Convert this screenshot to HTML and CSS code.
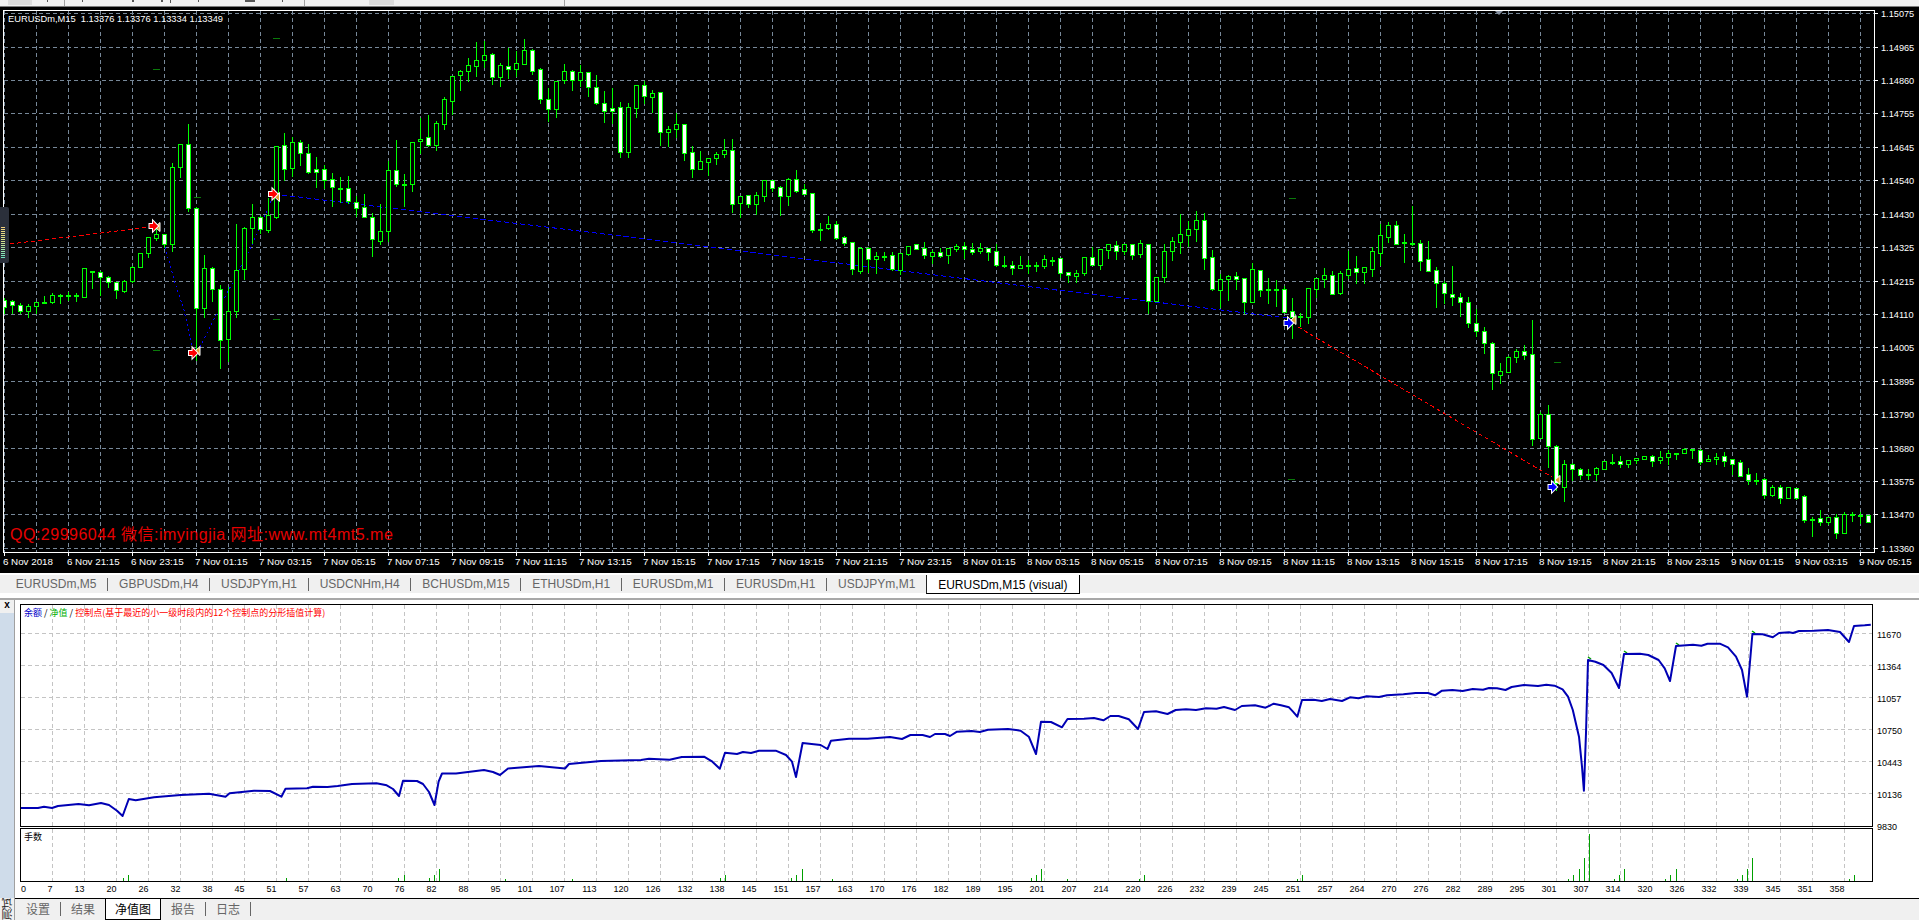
FILE: index.html
```html
<!DOCTYPE html>
<html lang="zh">
<head>
<meta charset="utf-8">
<title>EURUSDm,M15 (visual)</title>
<link rel="stylesheet" href="styles.css">
</head>
<body>
<div class="app">
  <header class="toolbar">
    <svg class="toolbar-bits" width="1919" height="6" viewBox="0 0 1919 6">
      <rect class="grip" x="8" y="0" width="24" height="5"/>
      <rect class="grip" x="369" y="0" width="25" height="5"/>
      <rect class="speck" x="47" y="0" width="1" height="2"/>
      <rect class="speck" x="82" y="0" width="1" height="2"/>
      <rect class="speck" x="132" y="0" width="2" height="2"/>
      <rect class="speck" x="161" y="0" width="2" height="2"/>
      <rect class="speck" x="170" y="0" width="1" height="3"/>
      <rect class="speck" x="198" y="0" width="1" height="2"/>
      <rect class="speck" x="245" y="0" width="10" height="2"/>
      <rect class="speck" x="282" y="0" width="1" height="2"/>
      <rect class="sep" x="64" y="0" width="1" height="6"/>
      <rect class="sep" x="304" y="0" width="1" height="6"/>
      <rect class="sep" x="564" y="0" width="1" height="6"/>
    </svg>
  </header>

  <section class="chart-pane">
    <svg id="price-chart" class="chart-svg" width="1919" height="566" viewBox="0 7 1919 566"></svg>
    <div class="level-meter"></div>
  </section>

  <nav class="chart-tabs">
    <span class="chart-tab">EURUSDm,M5</span>
    <span class="chart-tab">GBPUSDm,H4</span>
    <span class="chart-tab">USDJPYm,H1</span>
    <span class="chart-tab">USDCNHm,H4</span>
    <span class="chart-tab">BCHUSDm,M15</span>
    <span class="chart-tab">ETHUSDm,H1</span>
    <span class="chart-tab">EURUSDm,M1</span>
    <span class="chart-tab">EURUSDm,H1</span>
    <span class="chart-tab">USDJPYm,M1</span>
    <span class="chart-tab chart-tab-active">EURUSDm,M15 (visual)</span>
  </nav>

  <section class="tester">
    <aside class="tester-side">
      <span class="tester-close">x</span>
      <div class="tester-stripe"></div>
      <span class="tester-title">测试</span>
    </aside>
    <div class="tester-body">
      <svg id="equity-chart" class="equity-svg" width="1905" height="298" viewBox="14 600 1905 298"></svg>
      <nav class="tester-tabs">
        <span class="tester-tab tester-tab-sep">设置</span>
        <span class="tester-tab">结果</span>
        <span class="tester-tab tester-tab-active">净值图</span>
        <span class="tester-tab tester-tab-sep">报告</span>
        <span class="tester-tab tester-tab-sep">日志</span>
      </nav>
    </div>
  </section>
</div>
<script src="chart.js"></script>
</body>
</html>
```

FILE: styles.css
```css
* { box-sizing: border-box; }
html, body { margin: 0; padding: 0; background: #fff; }
body { width: 1919px; height: 920px; overflow: hidden; font-family: "Liberation Sans", "Noto Sans CJK SC", sans-serif; }
.app { display: flex; flex-direction: column; width: 1919px; height: 920px; }

.toolbar { height: 7px; background: #f0f0f0; border-bottom: 1px solid #7c7c7c; flex: none; }
.toolbar-bits { display: block; }
.grip { fill: #dcdcdc; }
.speck { fill: #555; }
.sep { fill: #a0a0a0; }

.chart-pane { position: relative; height: 566px; background: #000; flex: none; }
.chart-svg { display: block; }
.level-meter {
  position: absolute; left: 0; top: 200px; width: 9px; height: 56px;
  background: #2b303b; border-radius: 0 2px 2px 0;
}
.level-meter::after {
  content: ""; position: absolute; left: 1px; top: 20px; width: 4px; height: 31px;
  background:
    repeating-linear-gradient(to bottom, transparent 0 1px, #2b303b 1px 2px),
    linear-gradient(to bottom, #f3d27e, #d9e08a 45%, #6fe6c4);
}

.frame { fill: none; stroke: #fff; stroke-width: 1; }
.tick { stroke: #fff; stroke-width: 1; }
.grid { stroke: #778899; stroke-width: 1; stroke-dasharray: 4 3; fill: none; }
.wick { stroke: #00ff00; stroke-width: 1; }
.body-up { fill: #000; stroke: #00ff00; stroke-width: 1; }
.body-down { fill: #fff; stroke: #00ff00; stroke-width: 1; }
.doji { fill: #00ff00; }
.dash-mark { fill: #0a7a0a; }
.trade-red { fill: none; stroke: #ff0000; stroke-width: 1; stroke-dasharray: 4 3; }
.trade-blue { fill: none; stroke: #0000ff; stroke-width: 1; stroke-dasharray: 5 3; }
.trade-blue-thin { fill: none; stroke: #0000ff; stroke-width: 1; stroke-dasharray: 2 3; }
.arrow-red { fill: #ff0000; stroke: #fff; stroke-width: 2; paint-order: stroke; }
.arrow-blue { fill: #0000ff; stroke: #fff; stroke-width: 2; paint-order: stroke; }
.arrow-tail { fill: #e0a030; stroke: #fff; stroke-width: 1; }
.shift-mark { fill: #8a94a4; }
.crisp { shape-rendering: crispEdges; }

.axis-price { font-family: "Liberation Sans", sans-serif; font-size: 9.2px; fill: #fff; }
.axis-time { font-family: "Liberation Sans", sans-serif; font-size: 9.8px; fill: #fff; }
.chart-info { font-family: "Liberation Sans", sans-serif; font-size: 9.3px; fill: #fff; white-space: pre; }
.watermark { font-family: "Liberation Sans", "Noto Sans CJK SC", sans-serif; font-size: 16px; letter-spacing: 0.5px; fill: #e80000; }

.chart-tabs {
  flex: none; height: 27px; display: flex; align-items: flex-start;
  padding: 2px 0 0 5px; background: #fff; font-size: 12px; color: #666;
  border-bottom: 2px solid #a8a8a8;
  background-image: linear-gradient(to bottom, #f0f0f0 0 18px, transparent 18px);
  background-position: 0 2px; background-repeat: no-repeat; background-size: 100% 18px;
}
.chart-tab { height: 13px; margin-top: 3px; padding: 0 10.8px; line-height: 13px; border-right: 1px solid #666; white-space: nowrap; }
.chart-tab:nth-child(9) { border-right: 0; }
.chart-tab-active {
  height: 19px; margin-top: 0; line-height: 20px; padding: 0 11px; background: #fff; color: #000;
  border: 0; border-right: 1px solid #000; border-bottom: 1px solid #000; border-left: 1px solid #222;
}

.tester { flex: 1; display: flex; min-height: 0; }
.tester-side { flex: none; width: 14px; display: flex; flex-direction: column; background: #f0f0f0; }
.tester-close { height: 13px; line-height: 10px; text-align: center; font-size: 10px; font-weight: bold; color: #000; flex: none; }
.tester-stripe { flex: 1; background: #cfdcea; }
.tester-title {
  flex: none; height: 22px; width: 14px; writing-mode: vertical-rl; transform: rotate(180deg);
  font-family: "Noto Sans CJK SC", sans-serif; font-size: 11px; line-height: 14px; color: #222; white-space: nowrap;
}
.tester-body { flex: 1; display: flex; flex-direction: column; border-left: 1px solid #a0a0a0; background: #fff; min-width: 0; }
.equity-svg { display: block; flex: none; }
.equity-box { fill: none; stroke: #000; stroke-width: 1; }
.equity-grid { stroke: #c4c4c4; stroke-width: 1; stroke-dasharray: 4 3; fill: none; }
.equity-line { fill: none; stroke: #0000b4; stroke-width: 2; stroke-linejoin: round; }
.equity-nub { fill: none; stroke: #00a000; stroke-width: 1.5; }
.lot-bar { fill: #00a000; }
.axis-eq { font-family: "Liberation Sans", sans-serif; font-size: 9px; fill: #000; }
.legend { font-family: "Noto Sans CJK SC", sans-serif; font-size: 9px; fill: #000; }
.legend-blue { fill: #0000c8; }
.legend-green { fill: #00b000; }
.legend-red { fill: #ff0000; }

.tester-tabs {
  flex: 1; display: flex; align-items: flex-start; padding-left: 1px; background: #f0f0f0;
  border-top: 1px solid #000; color: #666;
  font-family: "Noto Sans CJK SC", sans-serif; font-size: 12px;
}
.tester-tab { height: 14px; margin-top: 3px; padding: 0 10px; line-height: 14px; white-space: nowrap; }
.tester-tab-sep { border-right: 1px solid #666; }
.tester-tab-active {
  height: 21px; margin: 0; line-height: 20px; padding: 0 9px; background: #fff; color: #000;
  border: 1px solid #000; border-top: 0;
}
```

FILE: chart.js
```js
var NS = "http://www.w3.org/2000/svg";
function el(parent, tag, attrs, text) {
  var n = document.createElementNS(NS, tag);
  for (var k in attrs) n.setAttribute(k, attrs[k]);
  if (text !== undefined) n.textContent = text;
  parent.appendChild(n);
  return n;
}
function line(p, x1, y1, x2, y2, cls) { return el(p, "line", { x1: x1, y1: y1, x2: x2, y2: y2, "class": cls }); }
function poly(p, pts, cls) {
  return el(p, "polyline", { points: pts.map(function (q) { return q.join(","); }).join(" "), "class": cls });
}

/* candles: wick top, body top, body bottom, wick low, filled */
var candles = [
[298,300,307,313,1],[300,301,305,313,1],[303,305,311,313,1],[304,306,311,317,0],[302,302,306,313,0],[296,302,302,303,1],
[293,295,302,303,0],[294,295,295,303,1],[292,295,295,300,1],[293,295,296,301,1],[268,268,297,297,0],[271,271,271,288,1],
[271,272,277,295,1],[276,277,282,287,1],[282,282,290,298,1],[280,281,291,292,0],[266,267,281,282,0],[253,253,267,267,0],
[237,237,253,257,0],[228,234,238,240,0],[234,234,244,247,1],[163,167,244,251,0],[144,144,167,177,0],[124,144,208,211,1],
[207,208,308,360,1],[255,268,308,317,0],[267,268,289,301,1],[285,289,340,368,1],[287,311,339,361,0],[224,270,311,317,0],
[227,228,269,279,0],[204,217,228,243,0],[216,217,229,233,1],[198,215,230,232,0],[146,146,217,218,0],[133,145,169,180,1],
[137,142,168,176,0],[140,142,153,165,1],[144,153,172,173,1],[157,169,172,187,1],[165,169,180,188,1],[173,179,187,206,1],
[177,188,188,202,1],[176,188,201,203,1],[196,202,208,216,1],[194,207,217,217,1],[213,217,239,256,1],[204,231,241,244,0],
[161,170,231,241,0],[140,170,184,186,1],[174,184,184,206,1],[142,142,184,191,0],[118,139,141,153,0],[115,137,145,146,1],
[121,123,145,150,0],[97,99,124,129,0],[76,76,101,114,0],[70,71,75,90,0],[58,65,71,81,0],[42,60,66,76,0],
[41,55,60,67,0],[53,54,77,84,1],[63,65,77,86,0],[48,66,69,78,1],[51,63,69,76,0],[39,50,64,64,0],
[49,50,71,74,1],[68,69,99,103,1],[88,99,109,121,1],[81,81,109,117,0],[64,71,80,83,0],[70,71,80,90,1],
[65,72,80,86,0],[72,72,87,96,1],[75,87,103,104,1],[91,103,111,122,1],[88,108,111,123,1],[102,107,152,157,1],
[103,107,152,157,0],[85,85,108,117,0],
[81,85,96,103,1],[90,93,97,112,0],[92,92,132,145,1],[126,129,132,146,0],[113,124,129,137,0],[124,124,153,160,1],
[146,152,169,177,1],[151,161,169,169,0],[158,158,162,175,0],[152,154,158,164,0],[139,150,154,157,0],[139,150,204,212,1],
[196,196,203,217,0],[195,195,204,207,1],[192,195,204,214,0],[180,180,196,201,0],[180,180,188,191,1],[186,187,196,215,1],
[178,179,196,205,0],[170,179,191,192,1],[184,189,194,194,1],[193,193,230,232,1],[223,229,229,240,1],[216,224,228,229,0],
[221,224,238,239,1],[236,237,243,245,1],[242,242,269,274,1],[247,248,271,273,0],[247,248,259,272,1],[252,256,259,273,0],
[252,256,256,260,1],[252,255,269,270,1],[253,253,270,274,0],[246,246,254,255,0],[244,244,249,249,1],[242,248,255,258,1],
[250,252,256,263,0],[248,252,256,257,1],[248,248,255,263,0],[244,246,249,251,0],[242,246,249,258,1],[243,249,252,254,1],
[243,248,251,253,0],[248,248,252,260,1],[244,251,265,266,1],[256,265,265,267,1],[261,265,268,274,1],[256,265,268,268,0],
[260,265,265,273,1],[262,265,265,271,1],
[255,259,266,268,0],[257,260,260,265,1],[258,258,273,277,1],[272,272,275,282,1],[270,273,276,282,0],[257,257,273,275,0],
[247,257,265,265,1],[249,249,265,269,0],[244,244,250,258,0],[241,245,251,259,1],[244,244,251,254,0],[244,244,255,259,1],
[240,243,254,257,0],[244,244,301,313,1],[277,277,301,301,0],[244,251,277,282,0],[237,241,251,260,0],[214,234,242,253,0],
[221,229,235,246,0],[211,220,229,241,0],[213,220,258,269,1],[250,257,289,290,1],[274,279,290,307,0],[275,276,279,300,0],
[272,276,279,289,1],[278,278,302,313,1],[263,269,302,302,0],[270,270,290,296,1],[278,289,289,303,1],[280,289,289,306,1],
[286,289,312,312,1],[298,311,317,338,1],[313,316,316,326,1],[288,288,317,323,0],[278,278,289,297,0],[268,275,279,287,0],
[271,275,294,294,1],[271,273,293,294,0],[251,269,275,278,0],[256,268,272,283,1],[267,267,272,283,0],[247,251,269,276,0],
[224,235,253,265,0],[222,225,237,242,0],[221,225,244,244,1],[234,242,242,262,1],[206,243,243,245,1],[240,243,261,270,1],
[241,259,271,271,1],[267,270,283,307,1],[281,283,293,303,1],[266,294,297,305,1],[293,297,302,316,1],[297,302,323,327,1],
[309,323,331,336,1],[327,331,343,353,1],[342,343,373,389,1],[363,371,375,383,0],[356,357,372,372,0],[349,351,357,362,0],
[345,351,355,359,1],[320,354,439,445,1],[412,414,438,438,0],[405,414,446,467,1],[445,446,483,490,1],[460,464,487,501,0],
[463,464,469,480,1],[468,469,475,479,1],[469,474,474,479,1],[467,468,474,480,0],[461,461,469,469,0],[454,462,462,464,1],
[456,461,464,467,1],[460,460,464,467,0],[458,458,460,463,0],[456,456,459,459,0],[455,456,461,466,1],[451,457,460,463,0],
[450,453,457,464,0],[453,453,453,459,1],[448,449,453,453,0],[449,449,449,458,1],[449,450,462,464,1],[455,459,461,461,0],
[453,457,459,464,0],[452,456,461,466,1],[459,459,464,474,1],[460,462,476,476,1],[468,474,480,484,1],[473,480,480,484,1],
[478,479,495,498,1],[485,487,495,496,0],[485,487,498,503,1],[487,487,498,498,0],[488,488,498,499,1],[495,496,520,522,1],
[517,519,519,536,1],[510,518,522,525,1],[517,517,522,524,0],[514,517,533,538,1],[512,514,533,533,0],[512,514,514,521,1],
[512,515,515,523,1],[515,515,522,522,1]
];

var priceLevels = [["1.15075",13],["1.14965",47],["1.14860",80],["1.14755",113],["1.14645",147],["1.14540",180],
  ["1.14430",214],["1.14325",247],["1.14215",281],["1.14110",314],["1.14005",347],["1.13895",381],["1.13790",414],
  ["1.13680",448],["1.13575",481],["1.13470",514],["1.13360",548]];

function timeLabels() {
  var out = ["6 Nov 2018", "6 Nov 21:15", "6 Nov 23:15"];
  [7, 8].forEach(function (d) {
    for (var h = 1; h < 24; h += 2) out.push(d + " Nov " + (h < 10 ? "0" : "") + h + ":15");
  });
  out.push("9 Nov 01:15", "9 Nov 03:15", "9 Nov 05:15");
  return out;
}

function arrow(p, cx, cy, cls, tx, ty) {
  el(p, "polygon", { points: [tx - 3, ty, tx + 2, ty - 4.5, tx + 2, ty + 4.5].join(","), "class": "arrow-tail" });
  var pts = [[-4.5,-2],[-1,-2],[-1,-5],[4,0],[-1,5],[-1,2],[-4.5,2]].map(function (q) {
    return (cx + q[0]) + "," + (cy + q[1]);
  }).join(" ");
  el(p, "polygon", { points: pts, "class": cls });
}

function drawPrice() {
  var s = document.getElementById("price-chart");
  var g = el(s, "g", { "class": "crisp" });
  var k;
  for (k = 0; k < 60; k++) {
    var vx = 4.5 + 32 * k;
    if (vx < 1874) line(g, vx, 11, vx, 552, "grid");
  }
  priceLevels.forEach(function (lv) { line(g, 4, lv[1] + 0.5, 1874, lv[1] + 0.5, "grid"); });

  var marks = [[276,38],[156,69],[197,197],[276,319],[156,350],[1292,198],[1557,362],[1291,479]];
  marks.forEach(function (m) { el(g, "rect", { x: m[0] - 3.5, y: m[1], width: 7, height: 1, "class": "dash-mark" }); });

  poly(g, [[10,244],[150,227]], "trade-red");
  poly(g, [[165,247],[175,283],[184,310],[192,347]], "trade-blue-thin");
  poly(g, [[200,347],[220,307],[253,243],[273,197]], "trade-blue-thin");
  poly(g, [[282,195],[637,238],[1040,288],[1287,318]], "trade-blue");
  poly(g, [[1298,327],[1552,477]], "trade-red");

  candles.forEach(function (c, n) {
    var x = 4.5 + 8 * n;
    if (c[0] < c[3]) line(g, x, c[0], x, c[3] + 1, "wick");
    if (c[1] === c[2]) {
      el(g, "rect", { x: x - 2.5, y: c[1], width: 5, height: 2, "class": "doji" });
    } else {
      el(g, "rect", { x: x - 2, y: c[1] + 0.5, width: 4, height: c[2] - c[1], "class": c[4] ? "body-down" : "body-up" });
    }
  });

  arrow(s, 154, 226, "arrow-red", 158, 227);
  arrow(s, 193.5, 353, "arrow-red", 198, 351);
  arrow(s, 273.5, 194, "arrow-red", 277.5, 197);
  arrow(s, 1289, 323, "arrow-blue", 1294, 320);
  arrow(s, 1553, 487, "arrow-blue", 1558, 480);

  el(s, "polygon", { points: "1495,11 1503,11 1499,15", "class": "shift-mark" });

  var f = el(s, "g", { "class": "crisp" });
  el(f, "rect", { x: 0, y: 7, width: 3, height: 566, fill: "#000" });
  line(f, 3.5, 10, 3.5, 553, "tick");
  line(f, 3, 10.5, 1875, 10.5, "tick");
  line(f, 3, 552.5, 1875, 552.5, "tick");
  line(f, 1874.5, 10, 1874.5, 553, "tick");

  priceLevels.forEach(function (lv) {
    line(f, 1875, lv[1] + 0.5, 1878, lv[1] + 0.5, "tick");
    el(s, "text", { x: 1881, y: lv[1] + 4, "class": "axis-price" }, lv[0]);
  });
  timeLabels().forEach(function (t, n) {
    var x = 4.5 + 64 * n;
    line(f, x, 553, x, 556, "tick");
    el(s, "text", { x: x - 1.6, y: 565, "class": "axis-time" }, t);
  });

  el(s, "text", { x: 8, y: 21.5, "class": "chart-info" }, "EURUSDm,M15  1.13376 1.13376 1.13334 1.13349");
  el(s, "text", { x: 10, y: 540, "class": "watermark" }, "QQ:29996044 微信:imyingjia 网址:www.mt4mt5.me");
}

var equity = [[20,808],[37,808],[43,806.7],[51,808],[57,806],[77.5,804],[88,805.3],[100,803],[108,805],[116,810.7],[121.6,816],[127.8,799],
[134.7,800.3],[153,797.3],[179.6,795],[208,793.7],[224.5,796.7],[228.6,793.3],[253,790.7],[269,791],[280.4,796.7],[284.5,788.7],[306,788.3],
[312,786.7],[326.5,787],[336.7,786],[351,784],[375.5,783.3],[385.7,785.3],[392,789],[398,796],[402,780.7],[416,781],[422,784],[428,792],[433.5,805],[437.6,781.7],
[441,773.5],[455,773.5],[483,770],[492,772],[499,775],[507,768.5],[538,766],[564,768.5],[568,764],[600,761],[640,760],[648,758.7],[668.6,759.7],[680.8,757],
[703,756.7],[711.4,761.7],[718.8,768.7],[724,752.7],[736,754],[742,752],[750,753],[758,750.7],[774.7,750.7],[785,755],[791,761.7],[795,777],
[801.6,743],[819.6,745],[826.5,749],[830,740.7],[848,738.7],[866.5,738.7],[889,737],[901,739],[909.4,735],[921.6,735],[929,737],[934,734],[944,734],
[949,736],[956,731.7],[970.6,731],[978.8,732],[987,729.7],[1007,729],[1019.6,730.7],[1027.8,736.7],[1035,754],[1040,721.7],[1050,722],[1061,727.3],
[1066.5,719],[1083,718.7],[1093,718],[1102.4,720.3],[1109.4,716],[1117.6,716],[1127.8,719.3],[1137,729],[1143,712],[1155,711.3],[1166.5,714],
[1174.7,710],[1185,709.3],[1195,710],[1205,708.3],[1215.5,708.7],[1223,707],[1234,710],[1240.8,706],[1254,705.3],[1264.5,707.7],[1272.7,703.7],
[1280,705.3],[1288,707.3],[1292,711.7],[1296.3,716.7],[1301,700],[1312.7,699.7],[1320.8,701],[1329,699],[1341,701],[1349,697.3],[1357.5,698.3],
[1365.7,696.3],[1378,697],[1386,695.3],[1402.4,694.3],[1414.7,693],[1427,693],[1434,695.3],[1441,690.7],[1451.4,690],[1461.6,691],[1471.8,689],
[1482,689.7],[1488,688],[1496,688.3],[1504.5,690],[1510.6,687],[1522.9,685],[1537,686],[1545.3,684.7],[1553.5,685.7],[1561.6,689.3],[1567,696.7],
[1571.8,710],[1578,736.7],[1581,766.7],[1582.9,790.7],[1585,733],[1587,660],[1594.3,661.7],[1602.4,665],[1610.6,673],[1618,688],[1623,654],
[1639,653.7],[1647.3,655],[1657.6,660],[1663.7,668.3],[1669,681],[1675,646],[1692,644.7],[1700.4,645.7],[1706.5,643.7],[1718.8,643.7],[1727,647.3],
[1735,656.7],[1741,670],[1746,696.7],[1751.4,634],[1761.6,634.3],[1771.8,637.3],[1778,633],[1788,632.3],[1792,633],[1798,631],[1812.7,630.7],
[1827,630],[1839,632],[1848,642],[1853,626],[1863.7,625.3],[1869.8,624.7]];

var lots = [[122,3],[127,6],[285,3],[397,3],[403,6],[428,3],[433,6],[438,12],[504,2],[571,2],
[719,3],[724,6],[790,3],[795,6],[801,12],[831,2],[1030,3],[1035,6],[1040,12],[1066,2],[1138,2],[1143,6],
[1296,2],[1301,6],[1567,2],[1572,6],[1578,12],[1583,23],[1588,47],[1613,2],[1618,6],[1623,12],[1664,2],[1669,6],[1675,12],
[1736,2],[1741,6],[1746,12],[1751,23],[1848,2],[1853,6]];

var eqLevels = [["11670",633],["11364",665],["11057",697],["10750",729],["10443",761],["10136",793],["9830",825]];
var xLabels = [0,7,13,20,26,32,38,45,51,57,63,70,76,82,88,95,101,107,113,120,126,132,138,145,151,157,163,170,176,182,189,195,201,207,214,220,226,232,239,245,251,257,264,270,276,282,289,295,301,307,314,320,326,332,339,345,351,358];

function drawEquity() {
  var s = document.getElementById("equity-chart");
  var g = el(s, "g", { "class": "crisp" });
  for (var k = 1; k < 58; k++) {
    var x = 19.5 + 32 * k;
    line(g, x, 605, x, 826, "equity-grid");
    line(g, x, 829, x, 881, "equity-grid");
  }
  eqLevels.slice(0, 6).forEach(function (lv) { line(g, 20, lv[1] + 0.5, 1871, lv[1] + 0.5, "equity-grid"); });

  [[1587,660],[1623,654],[1675,646],[1751,634]].forEach(function (n) { poly(s, [[n[0], n[1] - 3], [n[0] + 3, n[1] - 1]], "equity-nub"); });
  poly(s, equity, "equity-line");

  lots.forEach(function (l) { el(g, "rect", { x: l[0], y: 881 - l[1], width: 1, height: l[1], "class": "lot-bar" }); });

  el(g, "rect", { x: 19.5, y: 604.5, width: 1852, height: 222, "class": "equity-box" });
  el(g, "rect", { x: 19.5, y: 828.5, width: 1852, height: 53, "class": "equity-box" });

  eqLevels.forEach(function (lv) { el(s, "text", { x: 1876, y: lv[1] + 5, "class": "axis-eq" }, lv[0]); });
  xLabels.forEach(function (v, n) {
    var x = 19.5 + 32 * n;
    if (n === 0) el(s, "text", { x: 20, y: 892, "class": "axis-eq" }, v);
    else el(s, "text", { x: x, y: 892, "text-anchor": "end", "class": "axis-eq" }, v);
  });

  var t = el(s, "text", { x: 23, y: 616, "class": "legend" });
  el(t, "tspan", { "class": "legend-blue" }, "余额");
  el(t, "tspan", {}, " / ");
  el(t, "tspan", { "class": "legend-green" }, "净值");
  el(t, "tspan", {}, " / ");
  el(t, "tspan", { "class": "legend-red" }, "控制点(基于最近的小一级时段内的12个控制点的分形插值计算)");
  el(s, "text", { x: 23, y: 840, "class": "legend" }, "手数");
}

drawPrice();
drawEquity();
```
